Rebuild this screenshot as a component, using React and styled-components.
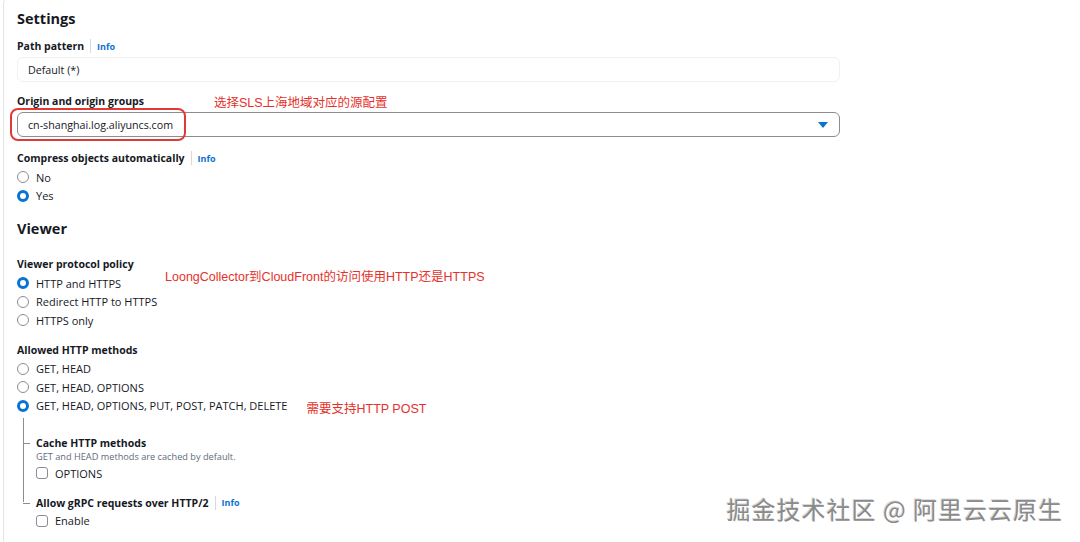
import React from "react";
import styled, { createGlobalStyle } from "styled-components";

const Global = createGlobalStyle`
  html, body { margin: 0; padding: 0; background: #fff; }
  body {
    width: 1080px;
    height: 542px;
    overflow: hidden;
    font-family: "Open Sans", "Noto Sans", sans-serif;
    color: #16191f;
  }
`;

const Page = styled.div`
  position: relative;
  width: 1080px;
  height: 542px;
  background: #fff;
  overflow: hidden;
`;

const Card = styled.div`
  margin: -6px 0 0 3px;
  padding: 15px 0 0 13px;
  height: 560px;
  border-left: 1px solid #e3e5e8;
  border-top: 1px solid #e3e5e8;
  border-top-left-radius: 10px;
  box-sizing: border-box;
`;

const Heading = styled.h2`
  margin: 0;
  font-size: 14.5px;
  font-weight: 700;
  line-height: 18px;
  margin-bottom: ${(p) => p.$gap || 0}px;
`;

const Field = styled.div`
  display: flex;
  flex-direction: column;
  margin-bottom: ${(p) => p.$gap || 0}px;
`;

const LabelRow = styled.div`
  display: flex;
  align-items: center;
  height: 18px;
  font-size: 10.5px;
  font-weight: 700;
  gap: 6px;
`;

const Divider = styled.span`
  width: 1px;
  height: 14px;
  background: #d5dbdb;
`;

const Info = styled.span`
  color: #0972d3;
  font-size: 9px;
  font-weight: 700;
`;

const Note = styled.span`
  font-family: "Liberation Sans", "Noto Sans CJK SC", sans-serif;
  color: #e5312b;
  font-size: 12.5px;
  font-weight: 400;
  margin-left: ${(p) => p.$offset || 0}px;
  position: relative;
  top: ${(p) => (p.$lift ? -p.$lift : 0)}px;
`;

const InputBox = styled.div`
  box-sizing: border-box;
  width: 823px;
  height: 25px;
  margin-top: 2px;
  border: 1px solid ${(p) => (p.$disabled ? "#f0f1f2" : "#8c8c94")};
  border-radius: 6px;
  background: #fff;
  display: flex;
  align-items: center;
  justify-content: space-between;
  padding: 0 10px;
  font-size: 10.7px;
  color: #16191f;
`;

const Highlight = styled.div`
  position: absolute;
  left: 10px;
  top: 108px;
  width: 176px;
  height: 33px;
  box-sizing: border-box;
  border: 2px solid #e03a36;
  border-radius: 8px;
  pointer-events: none;
`;

const Caret = styled.span`
  width: 0;
  height: 0;
  border-left: 5px solid transparent;
  border-right: 5px solid transparent;
  border-top: 6px solid #0972d3;
  margin-right: 1px;
`;

const Options = styled.div`
  display: flex;
  flex-direction: column;
  margin-top: 1px;
`;

const Option = styled.label`
  display: flex;
  align-items: center;
  gap: 7px;
  height: 18.5px;
  font-size: 11px;
  color: #16191f;
`;

const Radio = styled.span`
  box-sizing: border-box;
  width: 12px;
  height: 12px;
  border-radius: 50%;
  border: ${(p) => (p.$on ? "3.5px solid #0972d3" : "1px solid #8c8c94")};
  background: #fff;
  flex: none;
`;

const Box = styled.span`
  box-sizing: border-box;
  width: 12px;
  height: 12px;
  border-radius: 3px;
  border: 1px solid #8c8c94;
  background: #fff;
  flex: none;
`;

const Tree = styled.div`
  position: relative;
  display: flex;
  flex-direction: column;
  gap: 11px;
  margin-left: 6px;
  padding-top: 19px;
  &::before {
    content: "";
    position: absolute;
    left: 0;
    top: 3px;
    bottom: 28px;
    border-left: 1px solid #8c8c94;
  }
`;

const Branch = styled.div`
  position: relative;
  padding-left: 13px;
  &::after {
    content: "";
    position: absolute;
    left: 0;
    top: 9px;
    width: 7px;
    border-top: 1px solid #8c8c94;
  }
`;

const Hint = styled.div`
  font-size: 9.2px;
  color: #5f6b7a;
  line-height: 12px;
  margin: -1px 0 1px;
`;

const Watermark = styled.div`
  position: absolute;
  right: 17px;
  bottom: 16px;
  font-family: "Noto Sans CJK SC", sans-serif;
  font-size: 24px;
  font-weight: 400;
  color: #8a8a8a;
  letter-spacing: 1px;
  text-shadow: 1px 1px 0 #fff, -1px -1px 0 #d8d8d8;
`;

export default function App() {
  return (
    <Page>
      <Global />
      <Card>
        <Heading $gap={9}>Settings</Heading>

        <Field $gap={10}>
          <LabelRow>
            Path pattern <Divider /> <Info>Info</Info>
          </LabelRow>
          <InputBox $disabled>Default (*)</InputBox>
        </Field>

        <Field $gap={12}>
          <LabelRow>
            Origin and origin groups
            <Note $offset={64}>选择SLS上海地域对应的源配置</Note>
          </LabelRow>
          <InputBox>
            cn-shanghai.log.aliyuncs.com
            <Caret />
          </InputBox>
        </Field>

        <Field $gap={15}>
          <LabelRow>
            Compress objects automatically <Divider /> <Info>Info</Info>
          </LabelRow>
          <Options>
            <Option>
              <Radio /> No
            </Option>
            <Option>
              <Radio $on /> Yes
            </Option>
          </Options>
        </Field>

        <Heading $gap={17}>Viewer</Heading>

        <Field $gap={11}>
          <LabelRow>Viewer protocol policy</LabelRow>
          <Options>
            <Option>
              <Radio $on /> HTTP and HTTPS
              <Note $offset={37} $lift={8}>
                LoongCollector到CloudFront的访问使用HTTP还是HTTPS
              </Note>
            </Option>
            <Option>
              <Radio /> Redirect HTTP to HTTPS
            </Option>
            <Option>
              <Radio /> HTTPS only
            </Option>
          </Options>
        </Field>

        <Field>
          <LabelRow>Allowed HTTP methods</LabelRow>
          <Options>
            <Option>
              <Radio /> GET, HEAD
            </Option>
            <Option>
              <Radio /> GET, HEAD, OPTIONS
            </Option>
            <Option>
              <Radio $on /> GET, HEAD, OPTIONS, PUT, POST, PATCH, DELETE
              <Note $offset={12} $lift={-2}>需要支持HTTP POST</Note>
            </Option>
          </Options>
        </Field>

        <Tree>
          <Branch>
            <LabelRow>Cache HTTP methods</LabelRow>
            <Hint>GET and HEAD methods are cached by default.</Hint>
            <Option>
              <Box /> OPTIONS
            </Option>
          </Branch>
          <Branch>
            <LabelRow>
              Allow gRPC requests over HTTP/2 <Divider /> <Info>Info</Info>
            </LabelRow>
            <Option>
              <Box /> Enable
            </Option>
          </Branch>
        </Tree>
      </Card>
      <Highlight />
      <Watermark>掘金技术社区 @ 阿里云云原生</Watermark>
    </Page>
  );
}
